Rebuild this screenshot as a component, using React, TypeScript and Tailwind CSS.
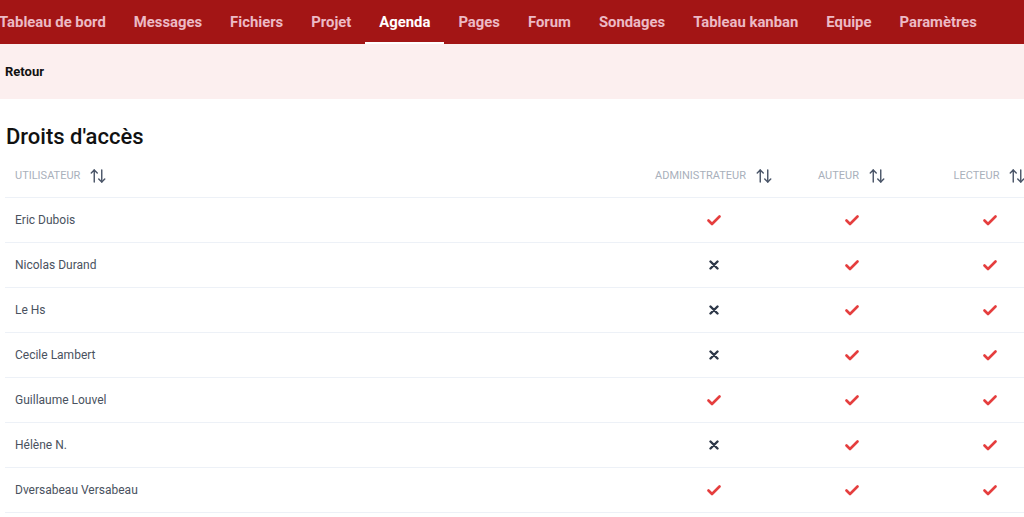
import React from "react";
import { ArrowUpDown } from "lucide-react";

const tabs = [
  "Tableau de bord",
  "Messages",
  "Fichiers",
  "Projet",
  "Agenda",
  "Pages",
  "Forum",
  "Sondages",
  "Tableau kanban",
  "Equipe",
  "Paramètres",
];

const rows: [string, boolean, boolean, boolean][] = [
  ["Eric Dubois", true, true, true],
  ["Nicolas Durand", false, true, true],
  ["Le Hs", false, true, true],
  ["Cecile Lambert", false, true, true],
  ["Guillaume Louvel", true, true, true],
  ["Hélène N.", false, true, true],
  ["Dversabeau Versabeau", true, true, true],
];

function Check() {
  return (
    <svg width="14" height="11" viewBox="0 0 14 11" fill="none">
      <path d="M1.5 5.5 L5 9 L12.5 1.5" stroke="#e53e3e" strokeWidth="2.6" strokeLinecap="round" strokeLinejoin="round" />
    </svg>
  );
}

function Cross() {
  return (
    <svg width="10" height="10" viewBox="0 0 10 10" fill="none">
      <path d="M1.5 1.5 L8.5 8.5 M8.5 1.5 L1.5 8.5" stroke="#2d3748" strokeWidth="2.4" strokeLinecap="round" />
    </svg>
  );
}

function Head({ label, center }: { label: string; center?: boolean }) {
  return (
    <div className={"flex items-center gap-[9px] " + (center ? "justify-center" : "")}>
      <span className="text-[11px] uppercase text-[#a9b0bb] pt-[1px]">{label}</span>
      <ArrowUpDown size={18} strokeWidth={1.9} color="#4a5568" />
    </div>
  );
}

export default function App() {
  return (
    <div className="w-[1024px] h-[517px] overflow-hidden bg-white" style={{ fontFamily: "Roboto, 'Liberation Sans', sans-serif" }}>
      <nav className="h-[44px] bg-[#a31515] flex items-stretch ml-[-15px]">
        {tabs.map((t) => (
          <div
            key={t}
            className={
              "px-[14px] pt-[3px] flex items-center text-[14.85px] font-bold whitespace-nowrap border-b-2 " +
              (t === "Agenda" ? "text-white border-white" : "text-[#ecbac5] border-transparent")
            }
          >
            {t}
          </div>
        ))}
      </nav>
      <div className="h-[55px] bg-[#fcefef] flex items-center px-[5px]">
        <span className="text-[13px] font-bold text-[#111]">Retour</span>
      </div>
      <div className="px-[5px]">
        <h1 className="pt-[24px] pl-[1px] text-[22px] leading-[28px] font-medium text-[#111]">Droits d'accès</h1>
        <div className="w-[1054px]">
          <div className="grid grid-cols-[640px_138px_138px_138px] h-[44px] items-center border-b border-[#edf1f7] mt-[3px]">
            <div className="pl-[10px]">
              <Head label="Utilisateur" />
            </div>
            <Head label="Administrateur" center />
            <Head label="Auteur" center />
            <Head label="Lecteur" center />
          </div>
          {rows.map(([name, a, b, c]) => (
            <div key={name} className="grid grid-cols-[640px_138px_138px_138px] h-[45px] items-center border-b border-[#edf1f7]">
              <div className="pl-[10px] text-[12px] text-[#4a5260]">{name}</div>
              <div className="flex justify-center">{a ? <Check /> : <Cross />}</div>
              <div className="flex justify-center">{b ? <Check /> : <Cross />}</div>
              <div className="flex justify-center">{c ? <Check /> : <Cross />}</div>
            </div>
          ))}
        </div>
      </div>
    </div>
  );
}
